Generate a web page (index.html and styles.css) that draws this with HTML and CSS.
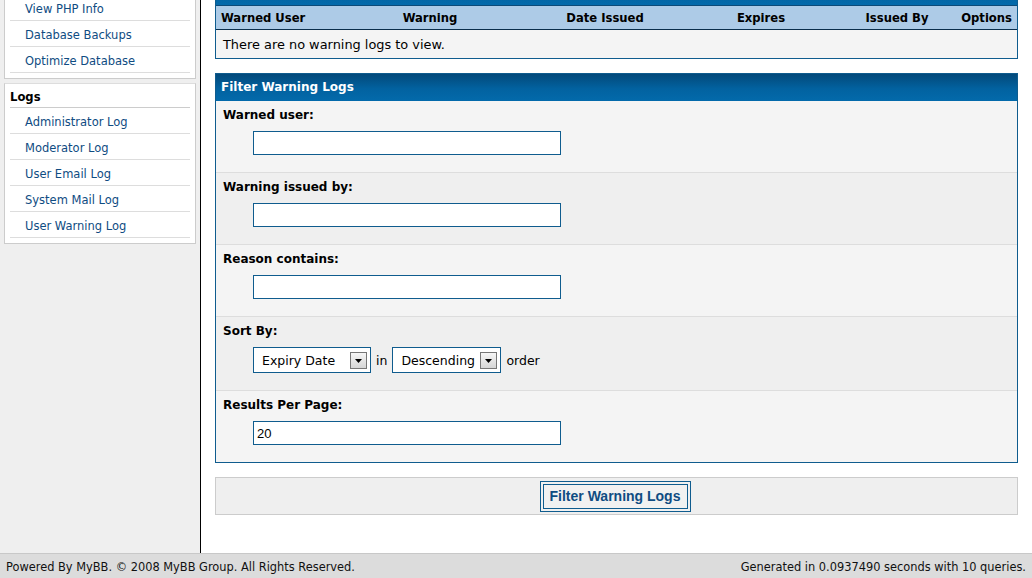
FILE: index.html
```html
<!DOCTYPE html>
<html>
<head>
<meta charset="utf-8">
<link rel="stylesheet" href="styles.css">
</head>
<body>
<div class="page">
  <div class="content">
    <div class="sidebar">
      <div class="menu menu-first">
        <a class="item" href="#">View PHP Info</a>
        <a class="item" href="#">Database Backups</a>
        <a class="item" href="#">Optimize Database</a>
      </div>
      <div class="menu">
        <div class="menu-title">Logs</div>
        <a class="item" href="#">Administrator Log</a>
        <a class="item" href="#">Moderator Log</a>
        <a class="item" href="#">User Email Log</a>
        <a class="item" href="#">System Mail Log</a>
        <a class="item" href="#">User Warning Log</a>
      </div>
    </div>
    <div class="main">
      <div class="box box-logs">
        <div class="box-head"></div>
        <table class="logs">
          <tr class="cols">
            <td class="c1">Warned User</td>
            <td class="c2">Warning</td>
            <td class="c3">Date Issued</td>
            <td class="c4">Expires</td>
            <td class="c5">Issued By</td>
            <td class="c6">Options</td>
          </tr>
          <tr class="empty">
            <td colspan="6">There are no warning logs to view.</td>
          </tr>
        </table>
      </div>

      <div class="box box-filter">
        <div class="box-head">Filter Warning Logs</div>
        <div class="row">
          <div class="label">Warned user:</div>
          <div class="field"><input class="text" type="text" value=""></div>
        </div>
        <div class="row alt">
          <div class="label">Warning issued by:</div>
          <div class="field"><input class="text" type="text" value=""></div>
        </div>
        <div class="row">
          <div class="label">Reason contains:</div>
          <div class="field"><input class="text" type="text" value=""></div>
        </div>
        <div class="row alt">
          <div class="label">Sort By:</div>
          <div class="field sort">
            <div class="select sel-field"><span class="sel-text">Expiry Date</span><span class="arrow"><svg width="7" height="4" viewBox="0 0 7 4"><path d="M0 0H7L3.5 4Z" fill="#000"/></svg></span></div>
            <span class="word">in</span>
            <div class="select sel-order"><span class="sel-text">Descending</span><span class="arrow"><svg width="7" height="4" viewBox="0 0 7 4"><path d="M0 0H7L3.5 4Z" fill="#000"/></svg></span></div>
            <span class="word">order</span>
          </div>
        </div>
        <div class="row last">
          <div class="label">Results Per Page:</div>
          <div class="field"><input class="text" type="text" value="20"></div>
        </div>
      </div>

      <div class="buttons">
        <button class="submit" type="button">Filter Warning Logs</button>
      </div>
    </div>
  </div>
  <div class="footer">
    <span>Powered By MyBB. © 2008 MyBB Group. All Rights Reserved.</span>
    <span>Generated in 0.0937490 seconds with 10 queries.</span>
  </div>
</div>
</body>
</html>
```

FILE: styles.css
```css
html, body {
  margin: 0;
  padding: 0;
  height: 100%;
  overflow: hidden;
}
body {
  font-family: "DejaVu Sans", Verdana, sans-serif;
  font-size: 12px;
  color: #000;
  background: #fff;
}
.page {
  display: flex;
  flex-direction: column;
  height: 578px;
}
.content {
  flex: 1;
  display: flex;
  min-height: 0;
  overflow: hidden;
}
.sidebar {
  flex: none;
  width: 201px;
  background: #efefef;
  border-right: 1px solid #000;
  padding: 0 4px;
  box-sizing: border-box;
}
.menu {
  background: #fff;
  border: 1px solid #ccc;
  border-top-color: #ddd;
  padding: 0 5px 5px;
  display: flex;
  flex-direction: column;
  margin-bottom: 4px;
  width: 192px;
  box-sizing: border-box;
}
.menu-first {
  margin-top: -7px;
}
.item {
  display: block;
  color: #0f4c82;
  text-decoration: none;
  height: 24px;
  padding-top: 1px;
  line-height: 26px;
  padding-left: 15px;
  border-bottom: 1px solid #ddd;
  font-size: 11.5px;
}
.menu-first .item:first-child {
  height: 25px;
  line-height: 28px;
}
.menu-title {
  font-weight: bold;
  font-size: 11.6px;
  height: 22px;
  padding-top: 1px;
  line-height: 25px;
  border-bottom: 1px solid #ccc;
}
.main {
  flex: 1;
  padding: 0 14px;
  min-width: 0;
}
.box {
  border: 1px solid #0f5c8e;
}
.box-logs {
  margin-top: -23px;
}
.box-head {
  height: 27px;
  line-height: 27px;
  background: linear-gradient(#03497a, #0262a0 55%, #036aab);
  color: #fff;
  font-weight: bold;
  font-size: 12px;
  padding-left: 5px;
}
.logs {
  width: 100%;
  border-collapse: collapse;
  font-size: 11.6px;
}
.cols td {
  background: #adcbe7;
  font-weight: bold;
  height: 23px;
  padding: 0;
  text-align: center;
  border-top: 1px solid #0c4a78;
  border-bottom: 1px solid #0a2e4c;
}
.cols .c1 { text-align: left; padding-left: 5px; width: 113px; }
.cols .c2 { width: 192px; }
.cols .c3 { width: 158px; }
.cols .c4 { width: 154px; }
.cols .c5 { width: 118px; }
.cols .c6 { text-align: right; padding-right: 5px; }
.empty td {
  background: #f4f4f4;
  height: 28px;
  padding: 0 0 0 7px;
  font-size: 12.9px;
}
.box-filter {
  margin-top: 14px;
}
.row {
  background: #f4f4f4;
  border-bottom: 1px solid #ddd;
  padding: 6px 0 17px 7px;
}
.row.alt {
  background: #efefef;
}
.row.last {
  border-bottom: none;
}
.label {
  font-weight: bold;
  font-size: 12px;
  height: 15px;
  line-height: 16px;
}
.field {
  margin-top: 9px;
  padding-left: 30px;
  display: flex;
  align-items: center;
}
.text {
  display: block;
  width: 308px;
  height: 24px;
  box-sizing: border-box;
  border: 1px solid #0f5c8e;
  background: #fff;
  padding: 0 3px;
  margin: 0;
  font-family: "Liberation Sans", Arial, sans-serif;
  font-size: 13px;
  color: #000;
  outline: none;
}
.field.sort {
  font-size: 12.5px;
}
.select {
  display: flex;
  align-items: center;
  height: 26px;
  box-sizing: border-box;
  border: 1px solid #0f5c8e;
  background: #fff;
  padding: 0 3px 0 8px;
  font-size: 12.5px;
}
.sel-field { width: 118px; }
.sel-order { width: 109px; padding-left: 8px; }
.sel-text {
  flex: 1;
  white-space: nowrap;
}
.arrow {
  width: 17px;
  height: 17px;
  box-sizing: border-box;
  border: 1px solid #777;
  background: linear-gradient(#f6f6f6, #d6d6d6);
  display: flex;
  align-items: center;
  justify-content: center;
  flex: none;
}
.arrow svg { display: block; margin-top: 2px; }
.word {
  margin: 0 5px;
}
.buttons {
  margin-top: 14px;
  background: #efefef;
  border: 1px solid #ccc;
  height: 36px;
  display: flex;
  justify-content: center;
  align-items: center;
}
.submit {
  font-family: "Liberation Sans", Arial, sans-serif;
  font-weight: bold;
  font-size: 14px;
  color: #0f4c82;
  background: #f1f1f1;
  border: 4px double #0f5c8e;
  height: 31px;
  width: 151px;
  padding: 0;
  margin-right: 3px;
}
.footer {
  height: 25px;
  flex: none;
  background: #dcdcdc;
  border-top: 1px solid #c8c8c8;
  display: flex;
  justify-content: space-between;
  align-items: center;
  padding: 1px 6px 0;
  font-size: 11.4px;
  color: #111;
  box-sizing: border-box;
}
```
